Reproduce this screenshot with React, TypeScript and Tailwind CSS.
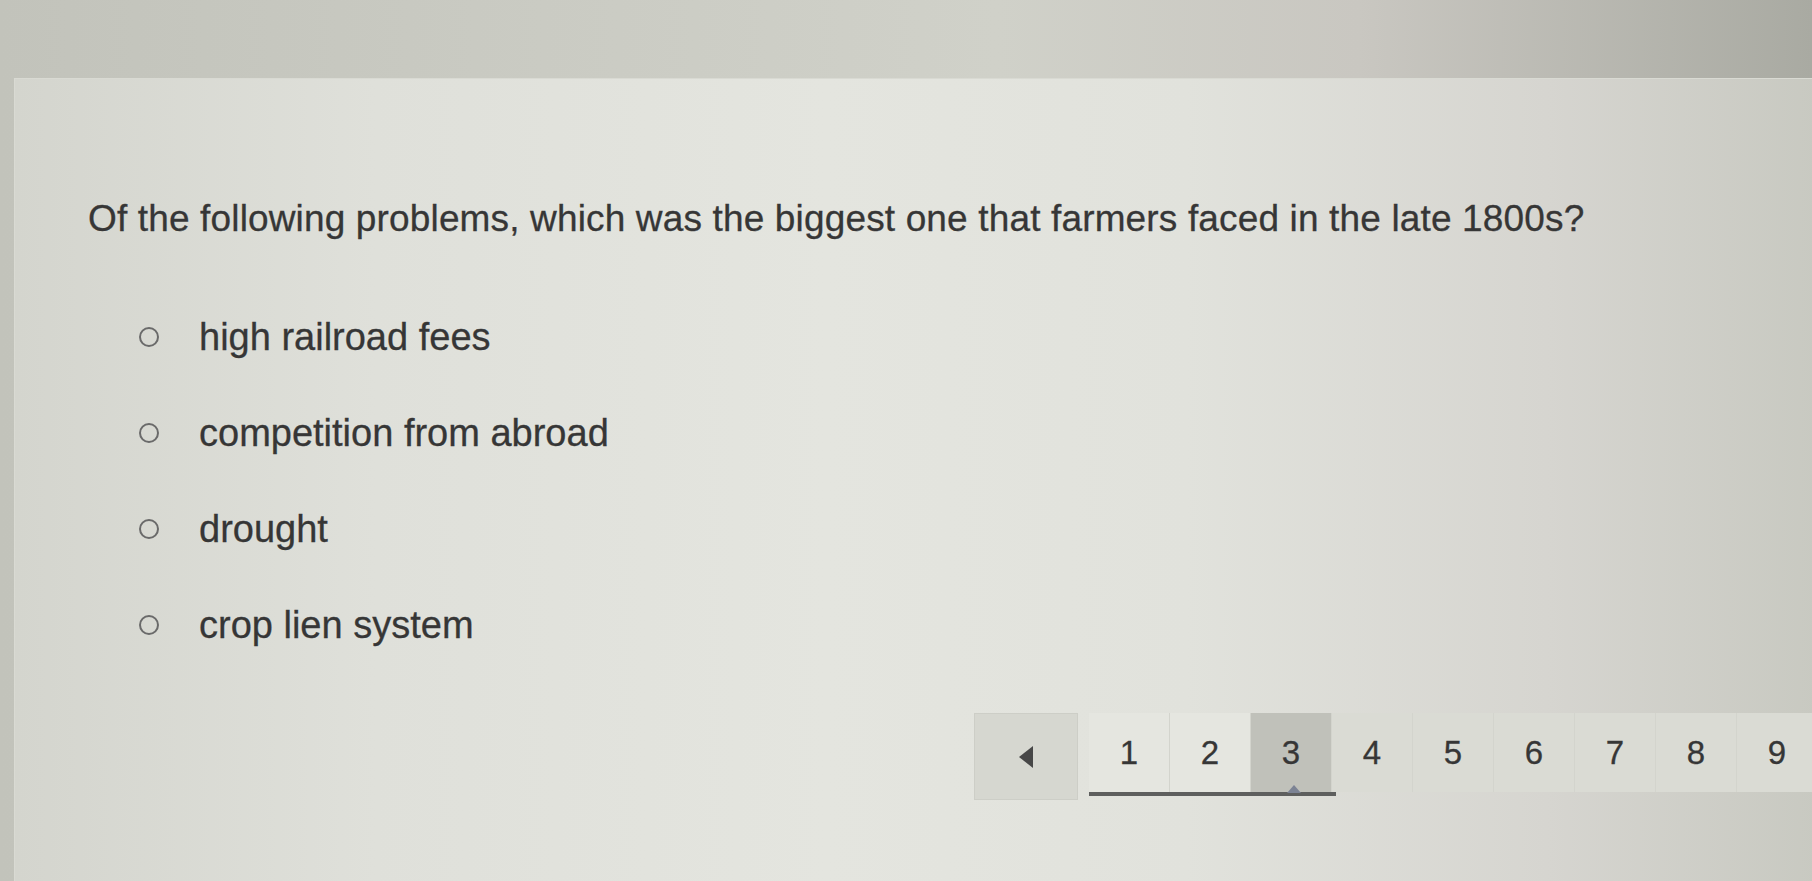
import React, { useState } from 'react';

const options = ['high railroad fees', 'competition from abroad', 'drought', 'crop lien system'];
const pages = [1, 2, 3, 4, 5, 6, 7, 8, 9];

const App: React.FC = () => {
    const [selected, setSelected] = useState<number | null>(null);
    const current = 3;

    return (
        <div
            className="w-[1812px] h-[881px] overflow-hidden flex flex-col text-[#363636] [-webkit-text-stroke:0.3px_#3a3a3a] bg-[linear-gradient(90deg,#c2c3bb_0%,#cacbc3_30%,#d0d1c9_55%,#c9c7c1_75%,#a9aaa2_100%)]"
            style={{ fontFamily: '"Liberation Sans", Arial, sans-serif' }}
        >
            {/* top bar */}
            <div className="h-[78px] shrink-0" />

            <div className="flex flex-1">
                <div className="w-[14px] shrink-0" />
                <div className="flex-1 border-t border-l border-[#d9dad3] bg-[linear-gradient(90deg,#d4d5ce_0%,#dfe0da_20%,#e4e5df_45%,#e1e2dc_65%,#d6d5d0_85%,#c8c9c1_100%)]">
                    <div className="pl-[73px] pt-[118px]">
                        <h2 className="text-[37px] leading-[43px] tracking-[0.15px]">
                            Of the following problems, which was the biggest one that farmers faced in the late 1800s?
                        </h2>

                        <div className="mt-[49px] flex flex-col pl-[51px]">
                            {options.map((opt, i) => (
                                <label key={opt} className="h-24 flex items-center cursor-pointer">
                                    <span
                                        onClick={() => setSelected(i)}
                                        className="w-[20px] h-[20px] rounded-full border-2 border-[#6a6a6a] flex items-center justify-center shrink-0"
                                    >
                                        {selected === i && <span className="w-2 h-2 rounded-full bg-[#444]" />}
                                    </span>
                                    <span className="ml-[40px] text-[38px] leading-none">{opt}</span>
                                </label>
                            ))}
                        </div>
                    </div>

                    {/* pager */}
                    <div className="mt-[40px] ml-[959px] flex items-start">
                        <button className="w-[104px] h-[87px] flex items-center justify-center bg-[#d6d7d0] border border-[#cdcec7]">
                            <svg width="16" height="22" viewBox="0 0 16 22">
                                <polygon points="15,0 15,22 1,11" fill="#474747" />
                            </svg>
                        </button>
                        <div className="ml-[11px] flex flex-col">
                            <div className="flex">
                                {pages.map(p => (
                                    <div
                                        key={p}
                                        className={`w-[81px] h-[79px] shrink-0 flex items-center justify-center text-[33px] border-r border-[#d3d4cd] ${
                                            p === current ? 'bg-[#c0c1ba]' : p < current ? 'bg-[#e5e6e0]' : 'bg-[#dadbd4]'
                                        }`}
                                    >
                                        {p}
                                    </div>
                                ))}
                            </div>
                            <div className="relative w-[247px] h-[4px] bg-[#5e5f5e]">
                                <svg className="absolute left-[198px] -top-[7px]" width="14" height="8" viewBox="0 0 14 8">
                                    <polygon points="0,8 14,8 7,0" fill="#7c8394" />
                                </svg>
                            </div>
                        </div>
                    </div>
                </div>
            </div>
        </div>
    );
};

export default App;
